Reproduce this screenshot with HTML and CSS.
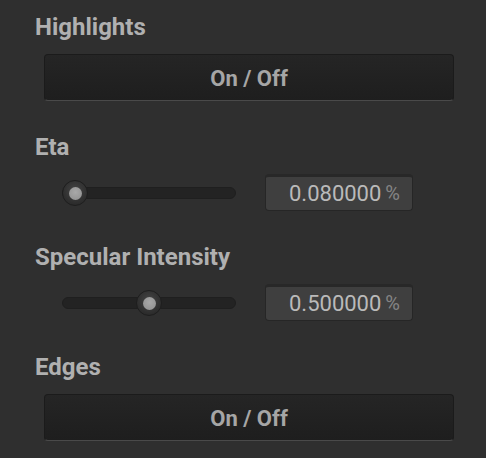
FILE: index.html
```
<!DOCTYPE html>
<html>
<head>
<meta charset="utf-8">
<link rel="stylesheet" href="styles.css">
</head>
<body>
<div class="panel">
  <section class="group">
    <div class="label">Highlights</div>
    <button class="toggle">On / Off</button>
  </section>
  <section class="group">
    <div class="label">Eta</div>
    <div class="slider-row">
      <div class="slider">
        <div class="track"></div>
        <div class="knob" style="left: 0px"><span class="dot"></span></div>
      </div>
      <div class="value"><span class="num">0.080000</span><span class="unit">%</span></div>
    </div>
  </section>
  <section class="group">
    <div class="label">Specular Intensity</div>
    <div class="slider-row">
      <div class="slider">
        <div class="track"></div>
        <div class="knob" style="left: 74px"><span class="dot"></span></div>
      </div>
      <div class="value"><span class="num">0.500000</span><span class="unit">%</span></div>
    </div>
  </section>
  <section class="group">
    <div class="label">Edges</div>
    <button class="toggle">On / Off</button>
  </section>
</div>
</body>
</html>
```
FILE: styles.css
```
html, body {
  margin: 0;
  padding: 0;
  background: #2f2f2f;
}
body {
  width: 486px;
  height: 458px;
  overflow: hidden;
  font-family: Roboto, "Liberation Sans", sans-serif;
}
.panel {
  padding: 13px 0 0 35px;
  display: flex;
  flex-direction: column;
  gap: 32px;
}
.group {
  display: flex;
  flex-direction: column;
  gap: 13px;
}
.label {
  font-size: 24px;
  line-height: 28px;
  font-weight: 700;
  color: #b0b0b0;
  height: 28px;
}
.toggle {
  margin-left: 9px;
  width: 410px;
  height: 47px;
  box-sizing: border-box;
  border: 1px solid #1b1b1b;
  border-bottom: 1px solid #4a4a4a;
  border-radius: 4px;
  background: linear-gradient(#252525, #1e1e1e);
  color: #a6a6a6;
  font-family: Roboto, "Liberation Sans", sans-serif;
  font-size: 22px;
  font-weight: 700;
  padding: 0;
  padding-top: 1px;
}
.slider-row {
  display: flex;
  align-items: center;
  height: 37px;
  padding-left: 27px;
}
.slider {
  position: relative;
  width: 174px;
  height: 26px;
  margin-top: 1px;
  display: flex;
  align-items: center;
}
.track {
  width: 174px;
  height: 12px;
  box-sizing: border-box;
  border-radius: 6px;
  background: #232323;
  border: 1px solid #1f1f1f;
}
.knob {
  position: absolute;
  top: 0;
  width: 26px;
  height: 26px;
  border-radius: 50%;
  box-sizing: border-box;
  background: radial-gradient(circle at 50% 40%, #454545, #2b2b2b 75%);
  border: 1px solid #1e1e1e;
  display: flex;
  align-items: center;
  justify-content: center;
}
.dot {
  width: 13px;
  height: 13px;
  border-radius: 50%;
  background: radial-gradient(circle at 50% 40%, #a8a8a8, #8e8e8e);
}
.value {
  margin-left: 29px;
  width: 148px;
  height: 37px;
  box-sizing: border-box;
  border: 1px solid #262626;
  border-top: 3px solid #282828;
  border-radius: 4px;
  background: #3f3f3f;
  display: flex;
  align-items: center;
  justify-content: flex-end;
  padding-right: 12px;
  padding-bottom: 1px;
}
.num {
  font-size: 22px;
  color: #bababa;
}
.unit {
  font-size: 20px;
  color: #858585;
  margin-left: 4px;
}
```
